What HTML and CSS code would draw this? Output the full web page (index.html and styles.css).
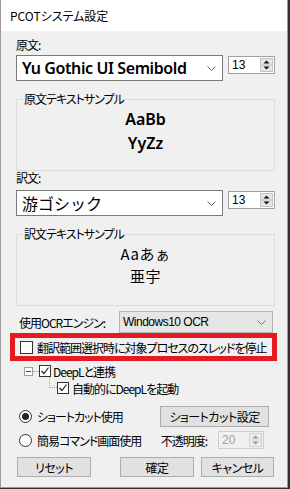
FILE: index.html
```html
<!DOCTYPE html>
<html lang="ja">
<head>
    <meta charset="UTF-8">
    <title>PCOTシステム設定</title>
    <link rel="stylesheet" href="styles.css">
</head>
<body>
    <div class="window">
        <!-- Title bar -->
        <div class="titlebar">PCOTシステム設定</div>

        <div class="client">
            <!-- Source font -->
            <div class="label label-src">原文:</div>
            <div class="font-row">
                <div class="combo font-combo face-bold">
                    <span>Yu Gothic UI Semibold</span>
                    <svg class="chevron" width="9" height="5" viewBox="0 0 9 5"><path d="M0.5 0.5 L4.5 4.5 L8.5 0.5" fill="none" stroke="#606060"/></svg>
                </div>
                <div class="spin">
                    <span>13</span>
                    <svg class="arrows" width="13" height="14" viewBox="0 0 13 14"><rect x="0.5" y="0.5" width="12" height="13" fill="#e6e6e6" stroke="#c4c4c4"/><line x1="1" y1="7" x2="12" y2="7" stroke="#c4c4c4"/><path d="M3.5 5.5 L6.5 2.5 L9.5 5.5 Z" fill="#111"/><path d="M3.5 8.5 L6.5 11.5 L9.5 8.5 Z" fill="#111"/></svg>
                </div>
            </div>
            <fieldset class="sample sample-src">
                <legend>原文テキストサンプル</legend>
                <div>AaBb</div>
                <div>YyZz</div>
            </fieldset>

            <!-- Translation font -->
            <div class="label label-dst">訳文:</div>
            <div class="font-row">
                <div class="combo font-combo face-jp">
                    <span>游ゴシック</span>
                    <svg class="chevron" width="9" height="5" viewBox="0 0 9 5"><path d="M0.5 0.5 L4.5 4.5 L8.5 0.5" fill="none" stroke="#606060"/></svg>
                </div>
                <div class="spin">
                    <span>13</span>
                    <svg class="arrows" width="13" height="14" viewBox="0 0 13 14"><rect x="0.5" y="0.5" width="12" height="13" fill="#e6e6e6" stroke="#c4c4c4"/><line x1="1" y1="7" x2="12" y2="7" stroke="#c4c4c4"/><path d="M3.5 5.5 L6.5 2.5 L9.5 5.5 Z" fill="#111"/><path d="M3.5 8.5 L6.5 11.5 L9.5 8.5 Z" fill="#111"/></svg>
                </div>
            </div>
            <fieldset class="sample sample-dst">
                <legend>訳文テキストサンプル</legend>
                <div>Aaあぁ</div>
                <div>亜宇</div>
            </fieldset>

            <!-- OCR engine -->
            <div class="ocr-row">
                <span class="ocr-label">使用OCRエンジン:</span>
                <div class="combo ocr-combo">
                    <span>Windows10 OCR</span>
                    <svg class="chevron" width="9" height="5" viewBox="0 0 9 5"><path d="M0.5 0.5 L4.5 4.5 L8.5 0.5" fill="none" stroke="#707070"/></svg>
                </div>
            </div>

            <!-- Highlighted option -->
            <div class="highlight">
                <span class="checkbox"></span>
                <span class="jp">翻訳範囲選択時に対象プロセスのスレッドを停止</span>
            </div>

            <!-- DeepL tree -->
            <div class="tree-row tree-parent">
                <span class="expander"></span>
                <span class="branch"></span>
                <svg class="check" width="12" height="12" viewBox="0 0 12 12"><rect x="0.5" y="0.5" width="11" height="11" fill="#fff" stroke="#333"/><path d="M2.5 6 L5 8.5 L9.5 2.5" fill="none" stroke="#222" stroke-width="1.2"/></svg>
                <span class="jp">DeepLと連携</span>
            </div>
            <div class="tree-row tree-child">
                <span class="connector"></span>
                <svg class="check" width="12" height="12" viewBox="0 0 12 12"><rect x="0.5" y="0.5" width="11" height="11" fill="#fff" stroke="#333"/><path d="M2.5 6 L5 8.5 L9.5 2.5" fill="none" stroke="#222" stroke-width="1.2"/></svg>
                <span class="jp">自動的にDeepLを起動</span>
            </div>

            <!-- Shortcut mode -->
            <div class="radio-row row-shortcut">
                <span class="radio selected"></span>
                <span class="jp">ショートカット使用</span>
                <button class="btn btn-shortcut">ショートカット設定</button>
            </div>
            <div class="radio-row row-command">
                <span class="radio"></span>
                <span class="jp">簡易コマンド画面使用</span>
                <span class="jp opacity-label">不透明度:</span>
                <div class="spin spin-disabled">
                    <span>20</span>
                    <svg class="arrows" width="13" height="14" viewBox="0 0 13 14"><rect x="0.5" y="0.5" width="12" height="13" fill="#ececec" stroke="#d4d4d4"/><line x1="1" y1="7" x2="12" y2="7" stroke="#d4d4d4"/><path d="M3.5 5.5 L6.5 2.5 L9.5 5.5 Z" fill="#9a9a9a"/><path d="M3.5 8.5 L6.5 11.5 L9.5 8.5 Z" fill="#9a9a9a"/></svg>
                </div>
            </div>

            <!-- Dialog buttons -->
            <div class="button-row">
                <button class="btn btn-reset">リセット</button>
                <button class="btn btn-ok">確定</button>
                <button class="btn btn-cancel">キャンセル</button>
            </div>
        </div>
    </div>
</body>
</html>
```

FILE: styles.css
```css
body {
    margin: 0;
    background-color: #2e3036;
    font-family: "Noto Sans CJK JP", "Noto Sans", sans-serif;
    font-size: 12px;
    color: #000;
    font-feature-settings: "palt";
    letter-spacing: -1px;
}

/* Window frame */
.window {
    width: 286px;
    height: 487px;
    border: 1px solid #9a9a9a;
    border-top: none;
    background-color: #f0f0f0;
    display: flex;
    flex-direction: column;
}
.titlebar {
    height: 31px;
    line-height: 31px;
    padding-left: 9px;
    background-color: #fff;
    font-size: 12px;
    letter-spacing: 0;
}
.client {
    padding: 0 12px 0 15px;
    display: flex;
    flex-direction: column;
}

/* Labels */
.label {
    line-height: 14px;
    height: 14px;
}
.label-src {
    margin-top: 7px;
}
.label-dst {
    margin-top: 0;
}

/* Font selection row */
.font-row {
    display: flex;
    align-items: flex-start;
    margin-top: 3px;
}
.label-dst + .font-row {
    margin-top: 5px;
}
.combo {
    box-sizing: border-box;
    display: flex;
    align-items: center;
    justify-content: space-between;
    background-color: #fff;
    border: 1px solid #7a7a7a;
    white-space: nowrap;
}
.font-combo {
    width: 207px;
    height: 26px;
    padding: 0 6px 0 5px;
}
.face-bold span {
    font-family: "Noto Sans", "Open Sans", sans-serif;
    font-weight: 600;
    font-size: 16px;
    letter-spacing: -0.4px;
}
.face-jp span {
    font-size: 16px;
    font-feature-settings: normal;
    letter-spacing: 0;
}
.chevron {
    display: block;
}

/* Number spinner */
.spin {
    box-sizing: border-box;
    width: 47px;
    height: 18px;
    margin: 1px 0 0 5px;
    border: 1px solid #a0a0a0;
    background-color: #fff;
    display: flex;
    align-items: center;
    justify-content: space-between;
    padding: 0 1px 0 3px;
    font-family: "Liberation Sans", sans-serif;
    font-size: 12px;
    letter-spacing: 0;
}
.arrows {
    display: block;
}
.spin-disabled {
    width: 46px;
    margin: 0 11px 0 0;
    border-color: #cfcfcf;
    background-color: #f0f0f0;
    color: #a0a0a0;
}

/* Sample group boxes */
.sample {
    margin: 11px 0 0 0;
    padding: 0 6px;
    border: 1px solid #dcdcdc;
    min-width: 0;
    text-align: center;
}
.sample legend {
    padding: 0 1px;
    line-height: 14px;
    font-family: "Noto Sans CJK JP", sans-serif;
    font-weight: 400;
    font-size: 12px;
    font-feature-settings: "palt";
    letter-spacing: -1px;
    text-align: left;
}
.sample-src {
    padding-top: 1px;
    padding-bottom: 15px;
    font-family: "Noto Sans", "Open Sans", sans-serif;
    font-weight: 600;
    font-size: 16px;
    line-height: 24px;
    letter-spacing: 0;
}
.sample-dst {
    padding-top: 2px;
    padding-bottom: 18px;
    font-size: 15px;
    line-height: 22px;
    font-feature-settings: normal;
    letter-spacing: 0.5px;
}
.sample-dst div {
    height: 22px;
}

/* OCR engine row */
.ocr-row {
    display: flex;
    align-items: center;
    margin-top: 5px;
}
.ocr-label {
    width: 100px;
    padding-left: 3px;
    white-space: nowrap;
}
.ocr-combo {
    width: 154px;
    height: 22px;
    background-color: #e6e6e6;
    border-color: #b4b4b4;
    padding: 0 6px 0 3px;
    font-family: "Liberation Sans", sans-serif;
    letter-spacing: -0.5px;
}

/* Red highlight */
.highlight {
    box-sizing: border-box;
    height: 28px;
    margin: 0 -2px 0 -6px;
    border: 5px solid #e41b23;
    display: flex;
    align-items: center;
    padding-left: 5px;
    white-space: nowrap;
}
.checkbox {
    box-sizing: border-box;
    flex: none;
    width: 13px;
    height: 13px;
    border: 1px solid #333;
    background-color: #fff;
    margin-right: 4px;
}

/* DeepL tree */
.tree-row {
    display: flex;
    align-items: center;
    height: 12px;
    white-space: nowrap;
}
.tree-parent {
    margin-top: 4px;
    padding-left: 8px;
}
.tree-child {
    margin-top: 5px;
    padding-left: 33px;
}
.expander {
    box-sizing: border-box;
    width: 9px;
    height: 9px;
    border: 1px solid #a0a0a0;
    background-color: #fff;
    display: flex;
    align-items: center;
    justify-content: center;
}
.expander::after {
    content: "";
    width: 5px;
    height: 1px;
    background-color: #444;
}
.branch {
    width: 6px;
    border-top: 1px dotted #a0a0a0;
}
.connector {
    box-sizing: border-box;
    align-self: flex-start;
    width: 8px;
    height: 11px;
    margin-top: -5px;
    border-left: 1px dotted #a0a0a0;
    border-bottom: 1px dotted #a0a0a0;
}
.check {
    display: block;
    margin-right: 2px;
}
.tree-child .check {
    margin-right: 3px;
}

/* Radio rows */
.radio-row {
    display: flex;
    align-items: center;
    padding-left: 3px;
    white-space: nowrap;
}
.row-shortcut {
    margin-top: 12px;
    height: 21px;
}
.row-command {
    margin-top: 4px;
    height: 18px;
}
.radio {
    box-sizing: border-box;
    flex: none;
    width: 13px;
    height: 13px;
    border: 1px solid #333;
    border-radius: 50%;
    background-color: #fff;
    margin-right: 5px;
    display: flex;
    align-items: center;
    justify-content: center;
}
.radio.selected::after {
    content: "";
    width: 7px;
    height: 7px;
    border-radius: 50%;
    background-color: #222;
}
.opacity-label {
    margin-left: auto;
    margin-right: 11px;
}

/* Buttons */
.btn {
    box-sizing: border-box;
    height: 20px;
    padding: 0;
    border: 1px solid #adadad;
    background-color: #e1e1e1;
    font-family: "Noto Sans CJK JP", sans-serif;
    font-size: 12px;
    font-feature-settings: "palt";
    letter-spacing: -0.5px;
    color: #000;
    white-space: nowrap;
}
.btn-shortcut {
    width: 109px;
    height: 21px;
    margin: 0 6px 0 auto;
}
.button-row {
    display: flex;
    margin-top: 8px;
}
.btn-reset {
    width: 74px;
    margin-left: 1px;
}
.btn-ok {
    width: 74px;
    margin-left: 29px;
}
.btn-cancel {
    width: 73px;
    margin-left: 7px;
}
```
